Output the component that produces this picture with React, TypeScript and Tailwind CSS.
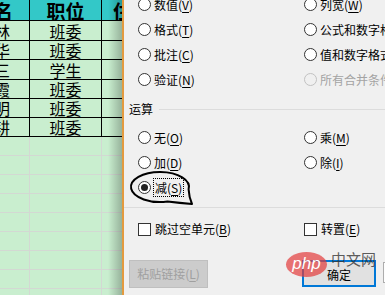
import React from 'react';

const font = { fontFamily: '"Noto Sans CJK SC", "Noto Sans", sans-serif' };

const rows = [
  { name: '张林', pos: '班委', h: 'h-[20px]' },
  { name: '李华', pos: '班委', h: 'h-[19px]' },
  { name: '张三', pos: '学生', h: 'h-[20px]' },
  { name: '王霞', pos: '班委', h: 'h-[19px]' },
  { name: '小明', pos: '班委', h: 'h-[19px]' },
  { name: '李耕', pos: '班委', h: 'h-[19px]' },
];

function Sheet() {
  return (
    <div className="w-[122px] shrink-0 relative flex flex-col overflow-hidden bg-[#c9eecf]">
      {/* header */}
      <div className="flex shrink-0 h-[21px] bg-[#33c8c8] border-b border-black font-bold text-[19px] leading-none">
        <div className="w-[30px] border-r border-black flex items-center justify-end pr-[16px] overflow-hidden whitespace-nowrap">
          姓名
        </div>
        <div className="w-[72px] border-r border-black flex items-center justify-center">职位</div>
        <div className="flex-1 flex items-center pl-[11px] overflow-hidden whitespace-nowrap">住址</div>
      </div>
      {rows.map((r) => (
        <div key={r.name} className={`flex shrink-0 ${r.h} border-b border-black text-[16px] leading-none`}>
          <div className="w-[30px] border-r border-black flex items-center justify-end pr-[19px] overflow-hidden whitespace-nowrap">
            {r.name}
          </div>
          <div className="w-[72px] border-r border-black flex items-center justify-center">{r.pos}</div>
          <div className="flex-1" />
        </div>
      ))}
      {Array.from({ length: 9 }).map((_, i) => (
        <div key={i} className="flex h-[19px] shrink-0 border-b border-[#d3d8d3]">
          <div className="w-[30px] border-r border-[#d3d8d3]" />
          <div className="w-[72px] border-r border-[#d3d8d3]" />
          <div className="flex-1" />
        </div>
      ))}
      {/* dialog shadow */}
      <div className="absolute inset-y-0 right-0 w-[14px] bg-gradient-to-r from-transparent to-black/25" />
    </div>
  );
}

function Label({ text, k, disabled }: { text: string; k: string; disabled?: boolean }) {
  return (
    <span className={`whitespace-nowrap ${disabled ? 'text-[#a3a3a3]' : 'text-black'}`}>
      {text}(<span className="underline underline-offset-2">{k}</span>)
    </span>
  );
}

function Radio({ text, k, checked, disabled }: { text: string; k: string; checked?: boolean; disabled?: boolean }) {
  return (
    <div className="flex items-center whitespace-nowrap">
      <span
        className={`w-[13px] h-[13px] shrink-0 rounded-full border flex items-center justify-center ${
          disabled ? 'border-[#c2c2c2] bg-[#f0f0f0]' : 'border-[#333] bg-white'
        }`}
      >
        {checked && <span className="w-[7px] h-[7px] rounded-full bg-[#222]" />}
      </span>
      {checked ? (
        <span className="ml-[2px] h-[19px] px-[1px] flex items-center border border-dotted border-black">
          <Label text={text} k={k} />
        </span>
      ) : (
        <span className="ml-[3px]">
          <Label text={text} k={k} disabled={disabled} />
        </span>
      )}
    </div>
  );
}

function Check({ text, k }: { text: string; k: string }) {
  return (
    <div className="flex items-center whitespace-nowrap">
      <span className="w-[13px] h-[13px] shrink-0 border border-[#333] bg-white" />
      <span className="ml-[4px]">
        <Label text={text} k={k} />
      </span>
    </div>
  );
}

function Dialog() {
  return (
    <div className="flex-1 bg-[#f0f0f0] border-l-2 border-[#e39a3f] overflow-hidden text-[12px] leading-none flex flex-col">
      {/* paste options */}
      <div className="mt-[-8px] pl-[14px] shrink-0">
        <div className="grid grid-cols-[166px_1fr] h-[25px] items-center">
          <Radio text="数值" k="V" />
          <Radio text="列宽" k="W" />
        </div>
        <div className="grid grid-cols-[166px_1fr] h-[25px] items-center">
          <Radio text="格式" k="T" />
          <Radio text="公式和数字格式" k="R" />
        </div>
        <div className="grid grid-cols-[166px_1fr] h-[25px] items-center">
          <Radio text="批注" k="C" />
          <Radio text="值和数字格式" k="U" />
        </div>
        <div className="grid grid-cols-[166px_1fr] h-[25px] items-center">
          <Radio text="验证" k="N" />
          <Radio text="所有合并条件格式" k="G" disabled />
        </div>
      </div>

      {/* operation group */}
      <div className="mt-[8px] h-[18px] shrink-0 flex items-center pl-[5px]">
        <span className="whitespace-nowrap">运算</span>
        <div className="flex-1 h-px bg-[#dcdcdc] ml-[6px]" />
      </div>
      <div className="mt-[7px] pl-[14px] shrink-0">
        <div className="grid grid-cols-[166px_1fr] h-[25px] items-center">
          <Radio text="无" k="O" />
          <Radio text="乘" k="M" />
        </div>
        <div className="grid grid-cols-[166px_1fr] h-[25px] items-center">
          <Radio text="加" k="D" />
          <Radio text="除" k="I" />
        </div>
        <div className="grid grid-cols-[166px_1fr] h-[25px] items-center">
          <Radio text="减" k="S" checked />
        </div>
      </div>

      <div className="mt-[7px] h-px bg-[#dcdcdc] shrink-0" />

      <div className="mt-[11px] h-[20px] shrink-0 pl-[14px] grid grid-cols-[166px_1fr] items-center">
        <Check text="跳过空单元" k="B" />
        <Check text="转置" k="E" />
      </div>

      {/* buttons */}
      <div className="mt-[21px] flex items-start shrink-0">
        <button className="ml-[5px] w-[79px] h-[28px] shrink-0 bg-[#cccccc] border border-[#bfbfbf] text-[#a0a0a0] text-[12px] whitespace-nowrap">
          粘贴链接(<span className="underline underline-offset-2">L</span>)
        </button>
        <button className="ml-[94px] w-[74px] h-[27px] shrink-0 bg-[#e1e1e1] border-2 border-[#0078d7] text-black text-[12px] pt-[3px]">
          确定
        </button>
        <div className="ml-[7px] mt-[2px] w-[20px] h-[21px] shrink-0 bg-[#fdfdfd] border border-[#adadad]" />
      </div>
    </div>
  );
}

export default function App() {
  return (
    <div className="w-[385px] h-[295px] overflow-hidden flex relative" style={font}>
      <Sheet />
      <Dialog />

      {/* speech bubble around selected option */}
      <svg className="absolute left-[128px] top-[170px]" width="68" height="40" viewBox="0 0 68 40">
        <path
          d="M 60.6 19.4 A 29 15 0 1 0 39.5 31.5 Q 52 33 64 34 Q 61 27 60.6 19.4 Z"
          fill="none"
          stroke="#000"
          strokeWidth="2"
          strokeLinejoin="round"
        />
      </svg>

      {/* watermark */}
      <div className="absolute left-[286px] top-[252px] w-[41px] h-[25px] rounded-[50%] bg-[#e23a3a]/70 flex items-center justify-center">
        <span className="text-white italic text-[17px] leading-none pb-[3px]" style={{ fontFamily: '"Liberation Sans", Arial, sans-serif' }}>
          php
        </span>
      </div>
      <div className="absolute left-[331px] top-[251px] text-[15px] leading-none text-[#333]/80 whitespace-nowrap">
        中文网
      </div>
    </div>
  );
}
